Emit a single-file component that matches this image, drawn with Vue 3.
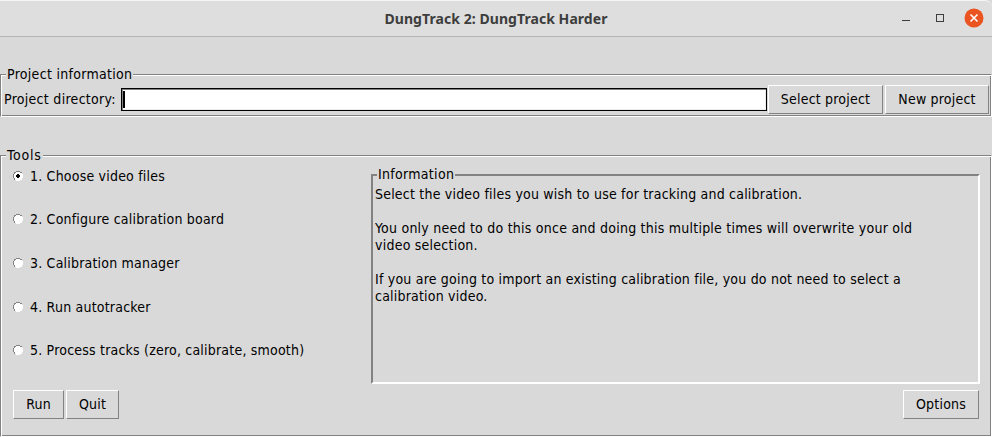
<script setup>
import { ref } from 'vue'

const tools = [
  '1. Choose video files',
  '2. Configure calibration board',
  '3. Calibration manager',
  '4. Run autotracker',
  '5. Process tracks (zero, calibrate, smooth)',
]
const selected = ref(0)
const directory = ref('')
</script>

<template>
  <div class="window">
    <header class="titlebar">
      <span class="side"></span>
      <h1 class="title">DungTrack 2: DungTrack Harder</h1>
      <div class="side controls">
        <svg width="92" height="36" viewBox="0 0 92 36" shape-rendering="crispEdges">
          <rect x="2" y="19" width="8" height="1" fill="#3d3d3d" />
          <rect x="36.5" y="13.5" width="7" height="7" fill="none" stroke="#3d3d3d" />
          <g shape-rendering="auto">
            <circle cx="74" cy="17" r="9.5" fill="#e95420" />
            <path d="M70.5 13.5l7 7M77.5 13.5l-7 7" stroke="#fff" stroke-width="1.6" />
          </g>
        </svg>
      </div>
    </header>

    <section class="group project">
      <span class="legend">Project information</span>
      <div class="row">
        <label class="dir-label">Project directory:</label>
        <div class="entry"><span class="caret"></span>{{ directory }}</div>
        <button class="btn select">Select project</button>
        <button class="btn new">New project</button>
      </div>
    </section>

    <section class="group tools">
      <span class="legend">Tools</span>
      <div class="body">
        <ul class="list">
          <li v-for="(tool, i) in tools" :key="tool" class="item" @click="selected = i">
            <svg class="radio" width="10" height="10" viewBox="0 0 10 10" shape-rendering="crispEdges">
              <path d="M3 0h4v1h2v2h1v4h-1v2h-2v1h-4v-1h-2v-2h-1v-4h1v-2h2z" fill="#fff" />
              <path d="M3 0h4v1h-4zM1 1h2v1h-1v1h-1zM7 1h2v1h-2zM0 3h1v4h-1zM1 7h1v2h-1z" fill="#828282" />
              <path v-if="selected === i" d="M4 3h2v1h1v2h-1v1h-2v-1h-1v-2h1z" fill="#000" />
            </svg>
            <span>{{ tool }}</span>
          </li>
        </ul>
        <div class="info">
          <span class="legend">Information</span>
          <p>Select the video files you wish to use for tracking and calibration.</p>
          <p class="note">You only need to do this once and doing this multiple times will overwrite your old<br />video selection.</p>
          <p>If you are going to import an existing calibration file, you do not need to select a<br />calibration video.</p>
        </div>
      </div>
      <footer class="actions">
        <button class="btn run">Run</button>
        <button class="btn quit">Quit</button>
        <button class="btn options">Options</button>
      </footer>
    </section>
  </div>
</template>

<style>
body {
  margin: 0;
  background: #d9d9d9;
}
</style>

<style scoped>
.window {
  box-sizing: border-box;
  width: 992px;
  height: 437px;
  overflow: hidden;
  background: #d9d9d9;
  color: #000;
  font: 14px/17px "DejaVu Sans Condensed", "DejaVu Sans", sans-serif;
  font-stretch: condensed;
  letter-spacing: 0.205px;
}
.titlebar {
  box-sizing: border-box;
  display: flex;
  height: 37px;
  align-items: center;
  background: #dedede;
  border-top: 1px solid #f5f5f5;
  border-bottom: 1px solid #b5b5b5;
  border-top-right-radius: 7px;
}
.side {
  width: 92px;
  height: 36px;
}
.title {
  flex: 1;
  margin: 0;
  text-align: center;
  font: bold 14px/20px "Noto Sans", "Open Sans", sans-serif;
  letter-spacing: 0.06px;
  color: #3d3d3d;
}
.group {
  position: relative;
  box-sizing: border-box;
  width: 992px;
  border: 1px solid;
  border-color: #828282 #fff #fff #828282;
  box-shadow: inset 1px 1px #fff, inset -1px -1px #828282;
}
.legend {
  position: absolute;
  top: -9px;
  left: 5px;
  padding: 0 1px;
  background: #d9d9d9;
  white-space: nowrap;
}
.project > .legend {
  letter-spacing: 0.3px;
}
.tools > .legend {
  letter-spacing: 0.75px;
}
.project {
  height: 43px;
  margin-top: 37px;
  padding: 10px 1px 0 3px;
}
.row {
  display: flex;
  align-items: center;
}
.dir-label {
  width: 117px;
  letter-spacing: 0.29px;
}
.entry {
  box-sizing: border-box;
  display: flex;
  align-items: center;
  width: 646px;
  height: 23px;
  border: 1px solid #000;
  background: #fff;
  box-shadow: inset 1px 1px #828282, inset -1px -1px #ededed;
}
.caret {
  width: 2px;
  height: 17px;
  margin-left: 1px;
  background: #000;
}
.btn {
  box-sizing: border-box;
  height: 29px;
  margin: 0;
  padding: 0;
  border: 1px solid;
  border-color: #fff #828282 #828282 #fff;
  border-radius: 0;
  background: #d9d9d9;
  color: #000;
  font: inherit;
  letter-spacing: 0.2px;
  white-space: nowrap;
}
.select {
  width: 115px;
  margin-left: 1px;
}
.new {
  width: 104px;
  margin-left: 2px;
}
.tools {
  height: 282px;
  margin-top: 38px;
  padding: 18px 11px 0 12px;
}
.body {
  display: flex;
  justify-content: space-between;
  height: 210px;
}
.list {
  width: 340px;
  margin: 0;
  padding: 0;
  list-style: none;
}
.item {
  display: flex;
  align-items: center;
  height: 17px;
  margin-bottom: 26.7px;
  gap: 7px;
}
.item:first-child {
  margin-top: -6.4px;
}
.radio {
  margin-bottom: 1px;
}
.info {
  position: relative;
  box-sizing: border-box;
  width: 609px;
  height: 210px;
  padding: 10px 2px;
  border: 2px solid;
  border-color: #828282 #fff #fff #828282;
}
.info .legend {
  top: -10px;
  left: 4px;
  letter-spacing: 0.3px;
}
.info p {
  margin: 0 0 17px;
  white-space: nowrap;
}
.info .note {
  letter-spacing: 0.235px;
}
.actions {
  display: flex;
  gap: 2px;
  margin-top: 6px;
  padding-right: 1px;
}
.run {
  width: 51px;
}
.quit {
  width: 53px;
}
.options {
  width: 76px;
  margin-left: auto;
}
</style>
